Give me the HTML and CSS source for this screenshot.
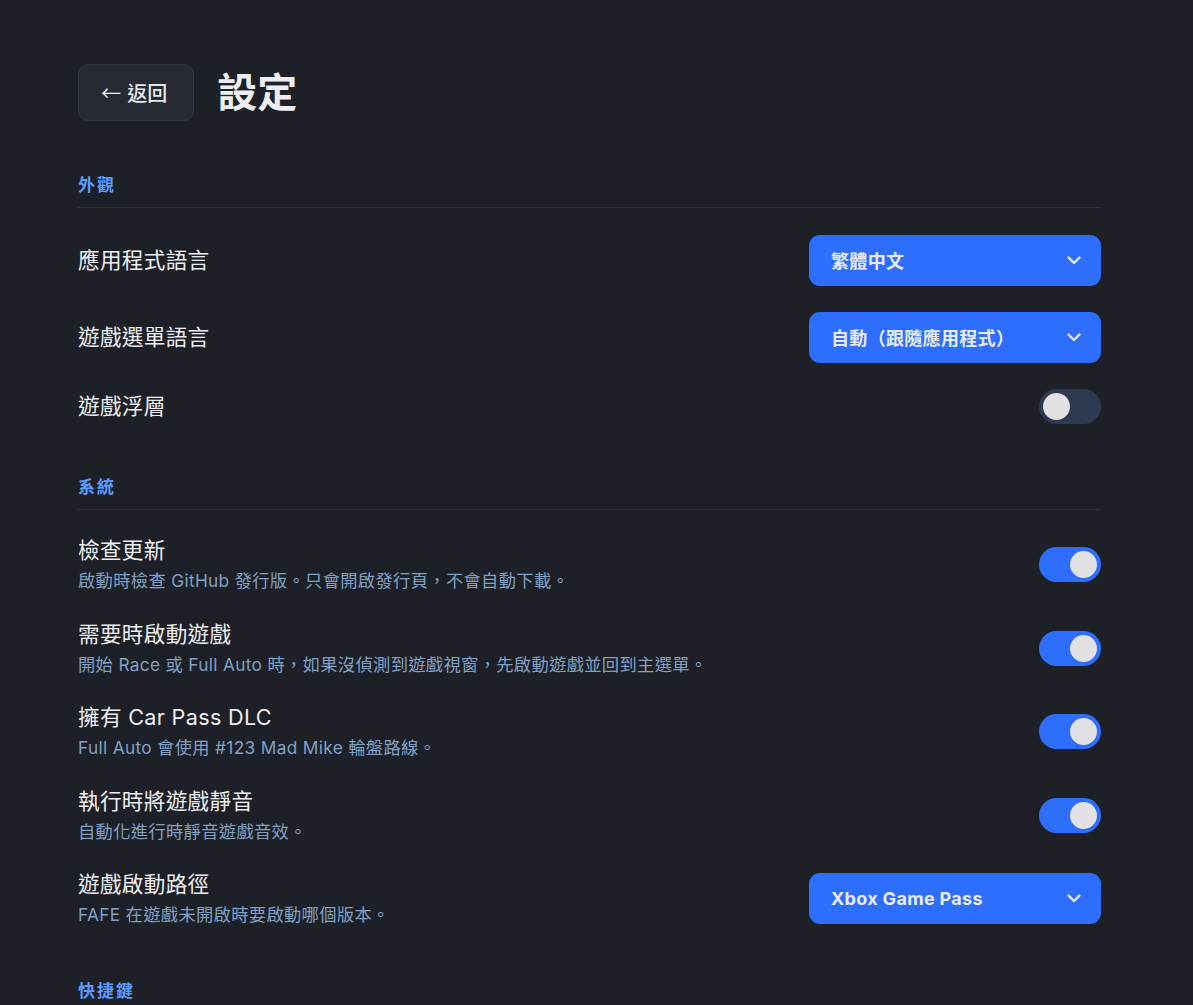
FILE: index.html
```html
<!DOCTYPE html>
<html lang="zh-Hant">
<head>
    <meta charset="UTF-8">
    <meta name="viewport" content="width=device-width, initial-scale=1.0">
    <title>設定</title>
    <link rel="stylesheet" href="styles.css">
</head>
<body>
    <div class="page">
        <div class="header">
            <button class="back-btn"><span class="arrow">←</span> 返回</button>
            <h1>設定</h1>
        </div>

        <!-- 外觀 -->
        <div class="section">
            <div class="section-label">外觀</div>
            <div class="rows">
                <div class="setting-row">
                    <div class="setting-text">
                        <div class="setting-title">應用程式語言</div>
                    </div>
                    <div class="select">
                        <span>繁體中文</span>
                        <svg class="chevron" width="14" height="9" viewBox="0 0 14 9"><path d="M1.5 1.5 L7 7 L12.5 1.5" fill="none" stroke="currentColor" stroke-width="2.4" stroke-linecap="round" stroke-linejoin="round"/></svg>
                    </div>
                </div>
                <div class="setting-row">
                    <div class="setting-text">
                        <div class="setting-title">遊戲選單語言</div>
                    </div>
                    <div class="select">
                        <span>自動（跟隨應用程式）</span>
                        <svg class="chevron" width="14" height="9" viewBox="0 0 14 9"><path d="M1.5 1.5 L7 7 L12.5 1.5" fill="none" stroke="currentColor" stroke-width="2.4" stroke-linecap="round" stroke-linejoin="round"/></svg>
                    </div>
                </div>
                <div class="setting-row">
                    <div class="setting-text">
                        <div class="setting-title">遊戲浮層</div>
                    </div>
                    <div class="toggle"><div class="knob"></div></div>
                </div>
            </div>
        </div>

        <!-- 系統 -->
        <div class="section">
            <div class="section-label">系統</div>
            <div class="rows">
                <div class="setting-row">
                    <div class="setting-text">
                        <div class="setting-title">檢查更新</div>
                        <div class="setting-desc">啟動時檢查 GitHub 發行版。只會開啟發行頁，不會自動下載。</div>
                    </div>
                    <div class="toggle on"><div class="knob"></div></div>
                </div>
                <div class="setting-row">
                    <div class="setting-text">
                        <div class="setting-title">需要時啟動遊戲</div>
                        <div class="setting-desc">開始 Race 或 Full Auto 時，如果沒偵測到遊戲視窗，先啟動遊戲並回到主選單。</div>
                    </div>
                    <div class="toggle on"><div class="knob"></div></div>
                </div>
                <div class="setting-row">
                    <div class="setting-text">
                        <div class="setting-title">擁有 Car Pass DLC</div>
                        <div class="setting-desc">Full Auto 會使用 #123 Mad Mike 輪盤路線。</div>
                    </div>
                    <div class="toggle on"><div class="knob"></div></div>
                </div>
                <div class="setting-row">
                    <div class="setting-text">
                        <div class="setting-title">執行時將遊戲靜音</div>
                        <div class="setting-desc">自動化進行時靜音遊戲音效。</div>
                    </div>
                    <div class="toggle on"><div class="knob"></div></div>
                </div>
                <div class="setting-row">
                    <div class="setting-text">
                        <div class="setting-title">遊戲啟動路徑</div>
                        <div class="setting-desc">FAFE 在遊戲未開啟時要啟動哪個版本。</div>
                    </div>
                    <div class="select latin">
                        <span>Xbox Game Pass</span>
                        <svg class="chevron" width="14" height="9" viewBox="0 0 14 9"><path d="M1.5 1.5 L7 7 L12.5 1.5" fill="none" stroke="currentColor" stroke-width="2.4" stroke-linecap="round" stroke-linejoin="round"/></svg>
                    </div>
                </div>
            </div>
        </div>

        <!-- 快捷鍵 -->
        <div class="section">
            <div class="section-label">快捷鍵</div>
        </div>
    </div>
</body>
</html>
```

FILE: styles.css
```css
/* Style global */
body {
    margin: 0;
    padding: 0;
    background: #1e2028;
    color: #e8e9ec;
    font-family: "Inter", "Noto Sans CJK TC", sans-serif;
    letter-spacing: 0.02em;
}

.page {
    width: 1023px;
    padding: 64px 0 40px 78px;
}

/* En-tête */
.header {
    display: flex;
    align-items: center;
    gap: 23px;
    margin-bottom: 52px;
}

.back-btn {
    height: 57px;
    padding: 0 26px 0 22px;
    background: #262a33;
    border: 1px solid #30353f;
    border-radius: 10px;
    color: #e8e9ec;
    font-family: "Inter", "Noto Sans CJK TC", sans-serif;
    font-size: 20px;
    font-weight: 500;
    letter-spacing: 0;
    cursor: pointer;
}

.back-btn .arrow {
    font-family: "Noto Sans CJK TC", sans-serif;
    font-weight: 400;
    letter-spacing: 1px;
}

.header h1 {
    margin: 0;
    font-size: 40px;
    font-weight: 700;
    line-height: 1;
    letter-spacing: 0;
    color: #eceef1;
}

/* Sections */
.section + .section {
    margin-top: 51px;
}

.section-label {
    font-size: 17px;
    font-weight: 700;
    line-height: 24px;
    letter-spacing: 2px;
    color: #5a9bff;
    padding-bottom: 10px;
    border-bottom: 1px solid #2d3039;
}

.rows {
    display: flex;
    flex-direction: column;
    gap: 26px;
    margin-top: 26.5px;
}

.setting-row {
    display: flex;
    justify-content: space-between;
    align-items: center;
}

.setting-title {
    font-size: 21.6px;
    line-height: 28px;
    color: #eceef1;
}

.setting-desc {
    margin-top: 4px;
    font-size: 17.3px;
    line-height: 25.5px;
    color: #7ea1c4;
}

/* Liste déroulante */
.select {
    width: 292px;
    height: 51px;
    box-sizing: border-box;
    padding: 0 20px 0 22px;
    background: #2d6eff;
    border-radius: 11px;
    display: flex;
    align-items: center;
    justify-content: space-between;
    font-size: 18px;
    font-weight: 700;
    color: #e9ecf4;
    cursor: pointer;
}

.chevron {
    color: #e6ebf5;
}

/* Interrupteur */
.toggle {
    width: 62px;
    height: 35px;
    border-radius: 18px;
    background: #2e3a51;
    display: flex;
    align-items: center;
    padding: 0 4px;
    box-sizing: border-box;
    cursor: pointer;
}

.toggle .knob {
    width: 27px;
    height: 27px;
    border-radius: 50%;
    background: #e1e1e3;
}

.toggle.on {
    background: #2d6eff;
    justify-content: flex-end;
}
```
